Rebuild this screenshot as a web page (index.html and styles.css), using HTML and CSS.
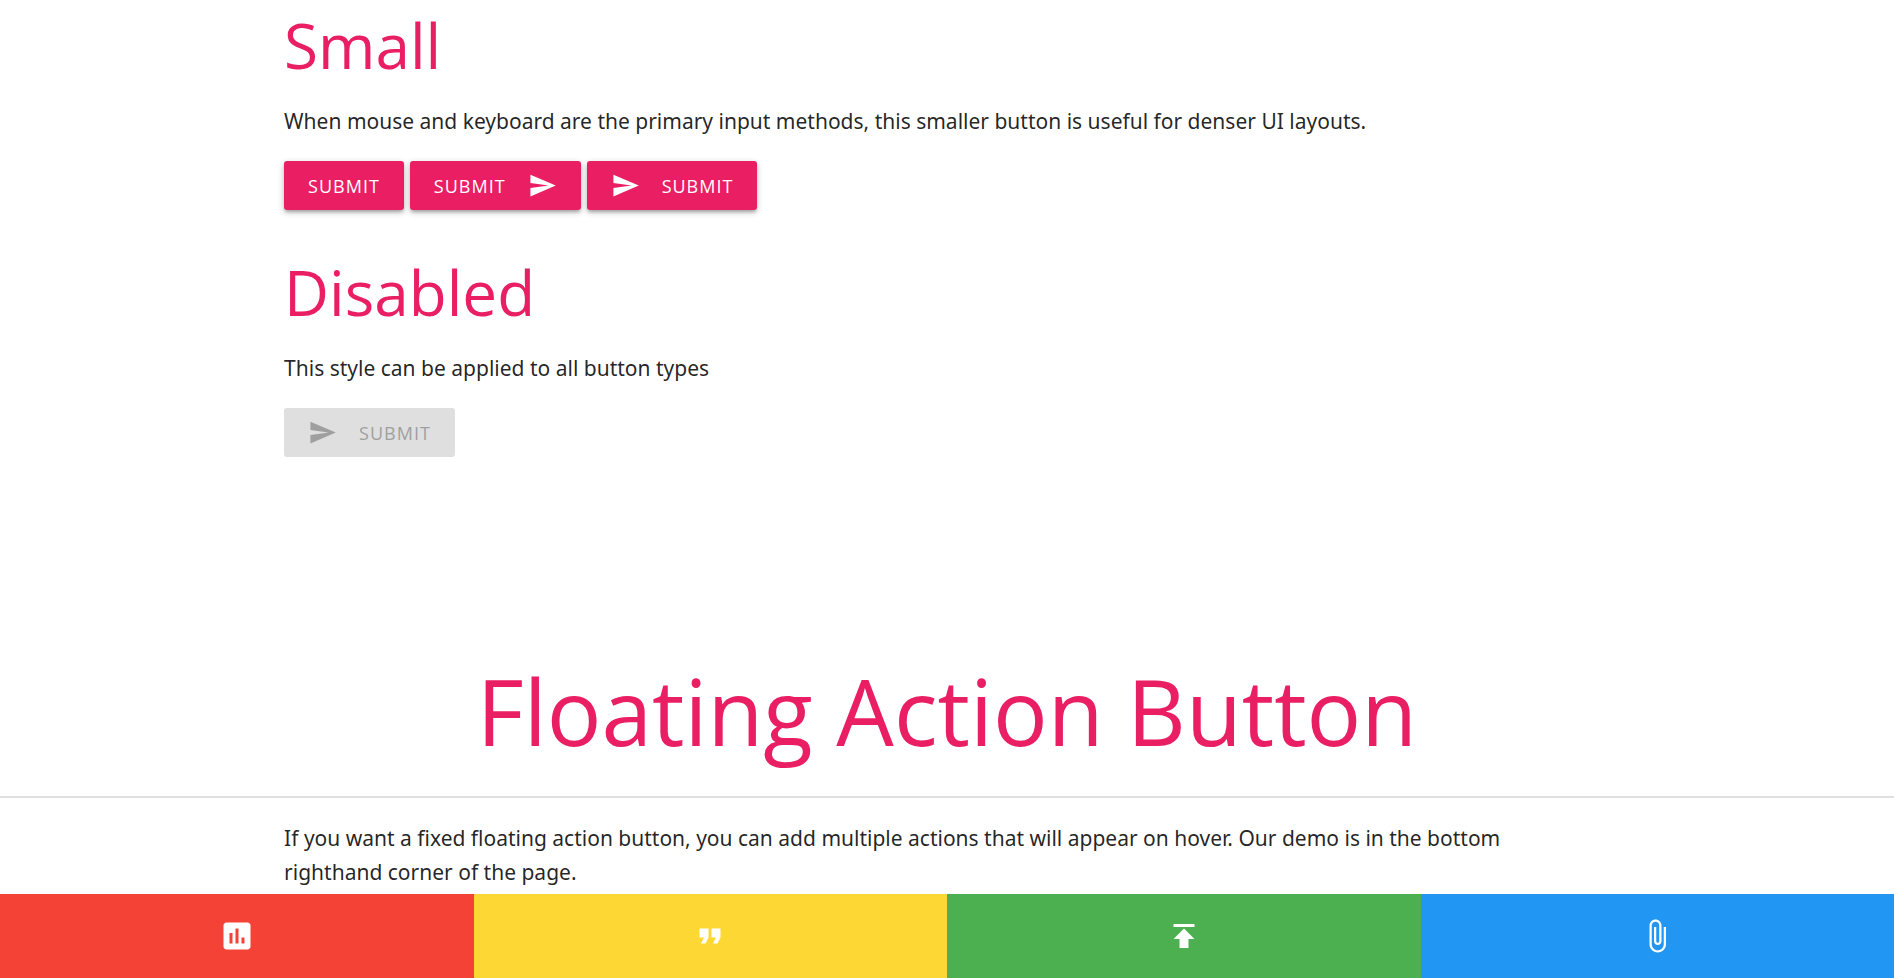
FILE: index.html
```html
<!DOCTYPE html>
<html lang="en">
<head>
<meta charset="utf-8">
<meta name="viewport" content="width=device-width, initial-scale=1">
<title>Buttons</title>
<link rel="stylesheet" href="styles.css">
</head>
<body>
<svg class="sprite" aria-hidden="true">
  <symbol id="send" viewBox="0 0 24 24"><path d="M2.01 21L23 12 2.01 3 2 10l15 2-15 2z"/></symbol>
</svg>
<main class="content">
  <section class="container demo">
    <h3 class="subtitle">Small</h3>
    <p class="text">When mouse and keyboard are the primary input methods, this smaller button is useful for denser UI layouts.</p>
    <div class="button-row">
      <button class="btn" type="button">Submit</button>
      <button class="btn" type="button">Submit<svg class="btn-icon" aria-hidden="true"><use href="#send"/></svg></button>
      <button class="btn" type="button"><svg class="btn-icon" aria-hidden="true"><use href="#send"/></svg>Submit</button>
    </div>
  </section>
  <section class="container demo">
    <h3 class="subtitle">Disabled</h3>
    <p class="text">This style can be applied to all button types</p>
    <div class="button-row">
      <button class="btn" type="button" disabled><svg class="btn-icon" aria-hidden="true"><use href="#send"/></svg>Submit</button>
    </div>
  </section>
  <section class="floating">
    <h2 class="title">Floating Action Button</h2>
    <div class="container">
      <p class="text intro">If you want a fixed floating action button, you can add multiple actions that will appear on hover. Our demo is in the bottom righthand corner of the page.</p>
    </div>
  </section>
</main>
<nav class="toolbar" aria-label="Actions">
  <a class="action red" href="#chart" aria-label="Chart"><svg class="action-icon" viewBox="0 0 24 24"><path d="M19 3H5c-1.1 0-2 .9-2 2v14c0 1.100.9 2 2 2h14c1.100 0 2-.9 2-2V5c0-1.100-.9-2-2-2zM9 17H7v-7h2v7zm4 0h-2V7h2v10zm4 0h-2v-4h2v4z"/></svg></a>
  <a class="action yellow" href="#quote" aria-label="Quote"><svg class="action-icon" viewBox="0 0 24 24"><path d="M6 17h3l2-4V7H5v6h3zm8 0h3l2-4V7h-6v6h3z"/></svg></a>
  <a class="action green" href="#publish" aria-label="Publish"><svg class="action-icon" viewBox="0 0 24 24"><path d="M5 4v2h14V4H5zm0 10h4v6h6v-6h4l-7-7-7 7z"/></svg></a>
  <a class="action blue" href="#attach" aria-label="Attach file"><svg class="action-icon" viewBox="0 0 24 24"><path d="M16.500 6v11.500c0 2.210-1.790 4-4 4s-4-1.790-4-4V5c0-1.380 1.120-2.500 2.500-2.500s2.500 1.120 2.500 2.500v10.500c0 .55-.45 1-1 1s-1-.45-1-1V6H10v9.500c0 1.380 1.120 2.500 2.500 2.500s2.500-1.120 2.500-2.500V5c0-2.210-1.790-4-4-4S7 2.790 7 5v12.500c0 3.040 2.460 5.500 5.500 5.500s5.500-2.460 5.500-5.500V6h-1.500z"/></svg></a>
</nav>
</body>
</html>
```
FILE: styles.css
```css
* {
  box-sizing: border-box;
}

body {
  margin: 0;
  min-height: 100vh;
  display: flex;
  flex-direction: column;
  background: #fff;
  color: rgba(0, 0, 0, 0.87);
  font-family: "Segoe UI", "Noto Sans", "Open Sans", sans-serif;
  font-size: 21px;
  line-height: 34px;
}

.sprite {
  display: none;
}

.content {
  padding-top: 9px;
}

.container {
  width: 70%;
  margin: 0 auto;
}

.demo {
  margin-bottom: 46px;
}

.subtitle,
.title {
  margin: 0;
  color: #e91e63;
  font-family: "Segoe UI", "Open Sans", sans-serif;
  font-weight: 400;
}

.subtitle {
  font-size: 62px;
  line-height: 72px;
}

.title {
  padding-bottom: 33px;
  border-bottom: 2px solid #e0e0e0;
  font-size: 91px;
  line-height: 104px;
  text-align: center;
}

.text {
  margin: 23px 0;
}

.intro {
  margin-bottom: 0;
  padding-right: 48px;
}

.button-row {
  display: flex;
  gap: 6px;
}

.btn {
  display: inline-flex;
  align-items: center;
  gap: 22px;
  height: 49px;
  padding: 0 24px;
  border: 0;
  border-radius: 3px;
  background: #e91e63;
  box-shadow: 0 3px 3px rgba(0, 0, 0, 0.14), 0 4px 2px -3px rgba(0, 0, 0, 0.12), 0 2px 7px rgba(0, 0, 0, 0.2);
  color: #fff;
  font-family: "Segoe UI", "Open Sans", sans-serif;
  font-size: 18px;
  letter-spacing: 1px;
  text-transform: uppercase;
  cursor: pointer;
}

.btn:disabled {
  background: #dfdfdf;
  box-shadow: none;
  color: #9f9f9f;
  cursor: default;
}

.btn-icon {
  width: 29px;
  height: 29px;
  fill: currentColor;
}

.floating {
  padding-top: 156px;
}

.toolbar {
  display: flex;
  margin-top: auto;
}

.action {
  flex: 1;
  display: flex;
  align-items: center;
  justify-content: center;
  height: 84px;
  color: #fff;
}

.action-icon {
  width: 36px;
  height: 36px;
  fill: currentColor;
}

.red {
  background: #f44336;
}

.yellow {
  background: #fdd835;
}

.green {
  background: #4caf50;
}

.blue {
  background: #2196f3;
}
```
